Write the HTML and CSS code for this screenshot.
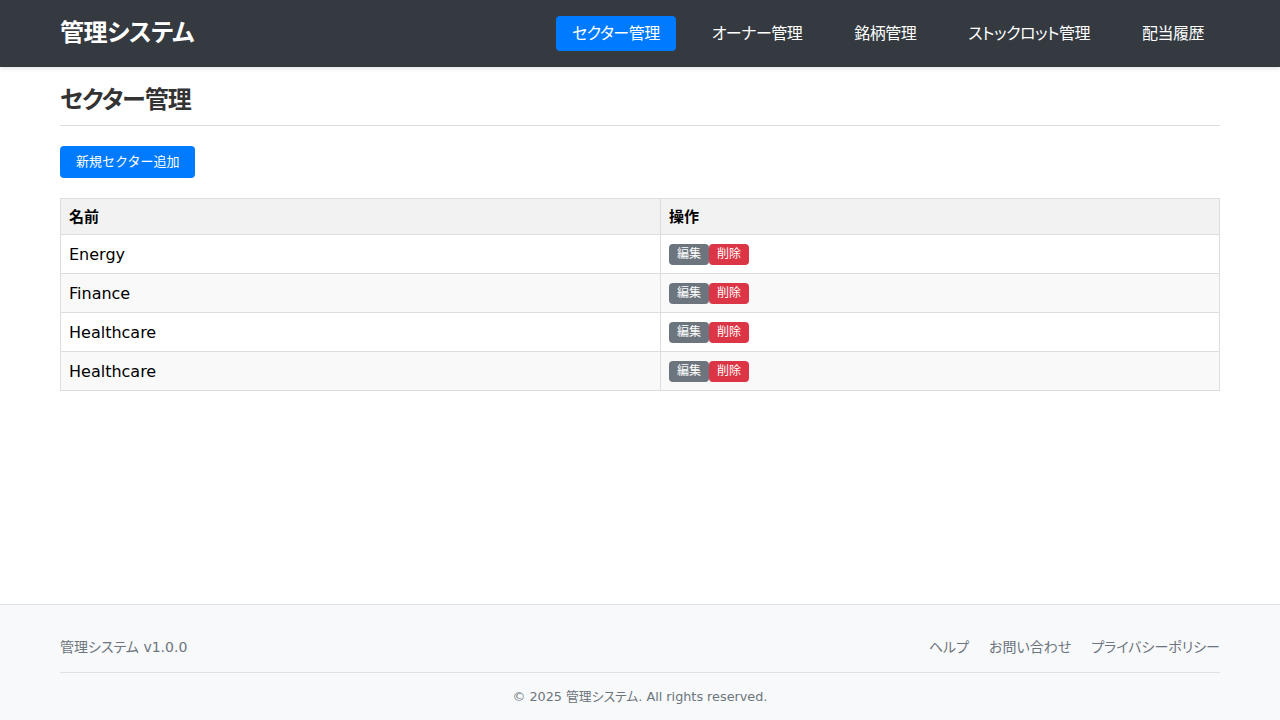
FILE: index.html
```html
<!DOCTYPE html>
<html lang="ja">
<head>
<meta charset="utf-8">
<title>セクター管理</title>
<link rel="stylesheet" href="styles.css">
</head>
<body>
<header class="navbar">
  <div class="container nav-inner">
    <a class="brand" href="#">管理システム</a>
    <nav class="nav">
      <a class="nav-link active" href="#">セクター管理</a>
      <a class="nav-link" href="#">オーナー管理</a>
      <a class="nav-link" href="#">銘柄管理</a>
      <a class="nav-link" href="#">ストックロット管理</a>
      <a class="nav-link" href="#">配当履歴</a>
    </nav>
  </div>
</header>
<main class="main">
  <div class="container">
    <h1 class="page-title">セクター管理</h1>
    <div class="actions"><a class="btn btn-primary" href="#">新規セクター追加</a></div>
    <table class="table">
      <thead>
        <tr><th class="col-name">名前</th><th>操作</th></tr>
      </thead>
      <tbody>
        <tr><td>Energy</td><td class="ops"><span class="btn-group"><a class="badge badge-gray" href="#">編集</a><a class="badge badge-red" href="#">削除</a></span></td></tr>
        <tr><td>Finance</td><td class="ops"><span class="btn-group"><a class="badge badge-gray" href="#">編集</a><a class="badge badge-red" href="#">削除</a></span></td></tr>
        <tr><td>Healthcare</td><td class="ops"><span class="btn-group"><a class="badge badge-gray" href="#">編集</a><a class="badge badge-red" href="#">削除</a></span></td></tr>
        <tr><td>Healthcare</td><td class="ops"><span class="btn-group"><a class="badge badge-gray" href="#">編集</a><a class="badge badge-red" href="#">削除</a></span></td></tr>
      </tbody>
    </table>
  </div>
</main>
<footer class="footer">
  <div class="container">
    <div class="footer-top">
      <span class="version">管理システム v1.0.0</span>
      <nav class="footer-links">
        <a href="#">ヘルプ</a>
        <a href="#">お問い合わせ</a>
        <a href="#">プライバシーポリシー</a>
      </nav>
    </div>
    <p class="copyright">© 2025 管理システム. All rights reserved.</p>
  </div>
</footer>
</body>
</html>
```
FILE: styles.css
```css
* { box-sizing: border-box; }
html, body { margin: 0; padding: 0; }
body {
  font-family: "DejaVu Sans", "Noto Sans CJK JP", sans-serif;
  color: #000;
  background: #fff;
  min-height: 100vh;
  display: flex;
  flex-direction: column;
}
a { text-decoration: none; color: inherit; }
.container { width: 1160px; margin: 0 auto; }

.navbar {
  background: #343a40;
  height: 67px;
  box-shadow: 0 2px 4px rgba(0,0,0,0.1);
}
.nav-inner {
  height: 100%;
  display: flex;
  align-items: center;
  justify-content: space-between;
}
.brand {
  color: #fff;
  font-size: 24px;
  font-weight: bold;
  line-height: 33px;
  letter-spacing: -0.4px;
  font-feature-settings: "palt";
}
.nav { display: flex; gap: 20px; }
.nav-link {
  color: #fff;
  font-size: 16px;
  line-height: 23px;
  padding: 6px 16px;
  border-radius: 4px;
  letter-spacing: -0.5px;
  font-feature-settings: "palt";
}
.nav-link.active { background: #007bff; }

.main { flex: 1; padding-top: 20px; }
.page-title {
  margin: 0;
  font-size: 24px;
  line-height: 26px;
  font-weight: bold;
  color: #333;
  padding-bottom: 12px;
  border-bottom: 1px solid #ddd;
  letter-spacing: -1px;
  font-feature-settings: "palt";
}
.actions { margin: 20px 0; }
.btn {
  display: inline-block;
  font-size: 13px;
  line-height: 20px;
  padding: 6px 16px;
  border-radius: 4px;
}
.btn-primary { background: #007bff; color: #fff; }

.table {
  width: 100%;
  border-collapse: collapse;
  table-layout: fixed;
}
.table th, .table td {
  border: 1px solid #ddd;
  text-align: left;
  padding: 8px;
  vertical-align: middle;
}
.table .col-name { width: 600px; }
.table th {
  background: #f2f2f2;
  font-size: 15px;
  line-height: 20px;
  padding: 8px 8px 7px;
  font-weight: bold;
}
.table td { font-size: 16px; line-height: 22px; padding: 9px 8px 7px; }
.table td.ops { padding: 8px; font-size: 0; line-height: 0; }
.table tbody tr:nth-child(even) { background: #f9f9f9; }
.btn-group { display: flex; }
.badge {
  font-size: 12px;
  line-height: 18px;
  padding: 1.5px 8px;
  border-radius: 4px;
  color: #fff;
}
.badge-gray { background: #6c757d; }
.badge-red { background: #dc3545; }

.footer {
  background: #f8f9fa;
  border-top: 1px solid #dee2e6;
  color: #6c757d;
  padding-top: 32px;
  padding-bottom: 14px;
}
.footer-top {
  display: flex;
  justify-content: space-between;
  align-items: center;
  padding-bottom: 15px;
  border-bottom: 1px solid #dee2e6;
  font-size: 14px;
  line-height: 20px;
  font-feature-settings: "palt";
}
.footer-links { display: flex; gap: 20px; }
.copyright {
  margin: 0;
  padding-top: 14px;
  text-align: center;
  font-size: 12.8px;
  line-height: 19px;
  font-feature-settings: "palt";
}
```
